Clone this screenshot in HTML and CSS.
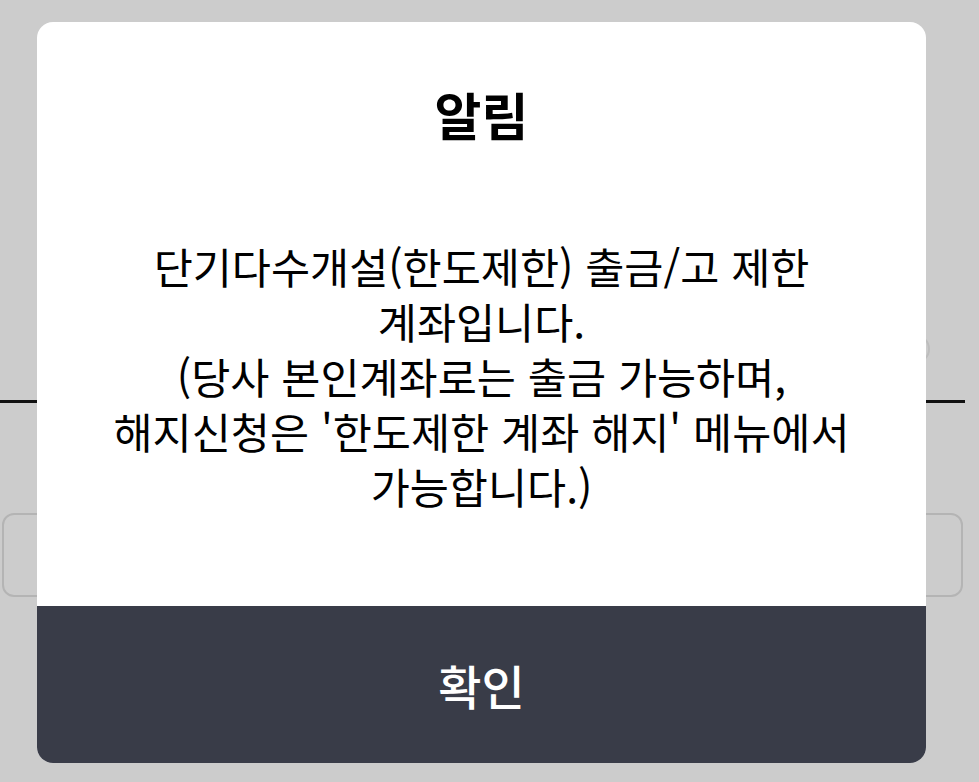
FILE: index.html
```html
<!DOCTYPE html>
<html lang="ko">
<head>
<meta charset="utf-8">
<title>알림</title>
<link rel="stylesheet" href="styles.css">
</head>
<body>
<div class="page">
  <div class="top-row">
    <span class="clear-btn"></span>
  </div>
  <div class="divider"></div>
  <div class="input-box"></div>
</div>
<div class="modal" role="dialog">
  <div class="modal-body">
    <h1 class="modal-title">알림</h1>
    <p class="modal-text">단기다수개설(한도제한) 출금/고 제한<br>계좌입니다.<br>(당사 본인계좌로는 출금 가능하며,<br>해지신청은 '한도제한 계좌 해지' 메뉴에서<br>가능합니다.)</p>
  </div>
  <button class="modal-btn" type="button">확인</button>
</div>
</body>
</html>
```

FILE: styles.css
```css
html, body {
  margin: 0;
  padding: 0;
}
body {
  width: 979px;
  height: 782px;
  background: #cccccc;
  font-family: "Noto Sans CJK KR", "Noto Sans", sans-serif;
  overflow: hidden;
  position: relative;
}
.page {
  width: 965px;
}
.top-row {
  height: 400px;
  box-sizing: border-box;
  display: flex;
  justify-content: flex-end;
  align-items: flex-end;
  padding-bottom: 36px;
  padding-right: 35px;
}
.clear-btn {
  width: 30px;
  height: 30px;
  border-radius: 50%;
  border: 2px solid #bdbdbd;
  box-sizing: border-box;
}
.divider {
  height: 3px;
  background: #111;
}
.input-box {
  margin-top: 110px;
  margin-left: 2px;
  width: 961px;
  height: 84px;
  box-sizing: border-box;
  border: 2px solid #b4b4b4;
  border-radius: 12px;
}
.modal {
  position: absolute;
  left: 37px;
  top: 22px;
  width: 889px;
  height: 741px;
  background: #ffffff;
  border-radius: 16px;
  overflow: hidden;
  display: flex;
  flex-direction: column;
}
.modal-body {
  flex: 1;
  padding-top: 62px;
  text-align: center;
  color: #000;
}
.modal-title {
  margin: 0;
  font-size: 51px;
  line-height: 60px;
  font-weight: 700;
}
.modal-text {
  margin: 94px 0 0;
  font-size: 42.5px;
  line-height: 55px;
  font-weight: 400;
}
.modal-btn {
  height: 157px;
  border: 0;
  margin: 0;
  padding: 0;
  background: #393c48;
  color: #ffffff;
  font-family: inherit;
  font-size: 47px;
  font-weight: 500;
}
```
